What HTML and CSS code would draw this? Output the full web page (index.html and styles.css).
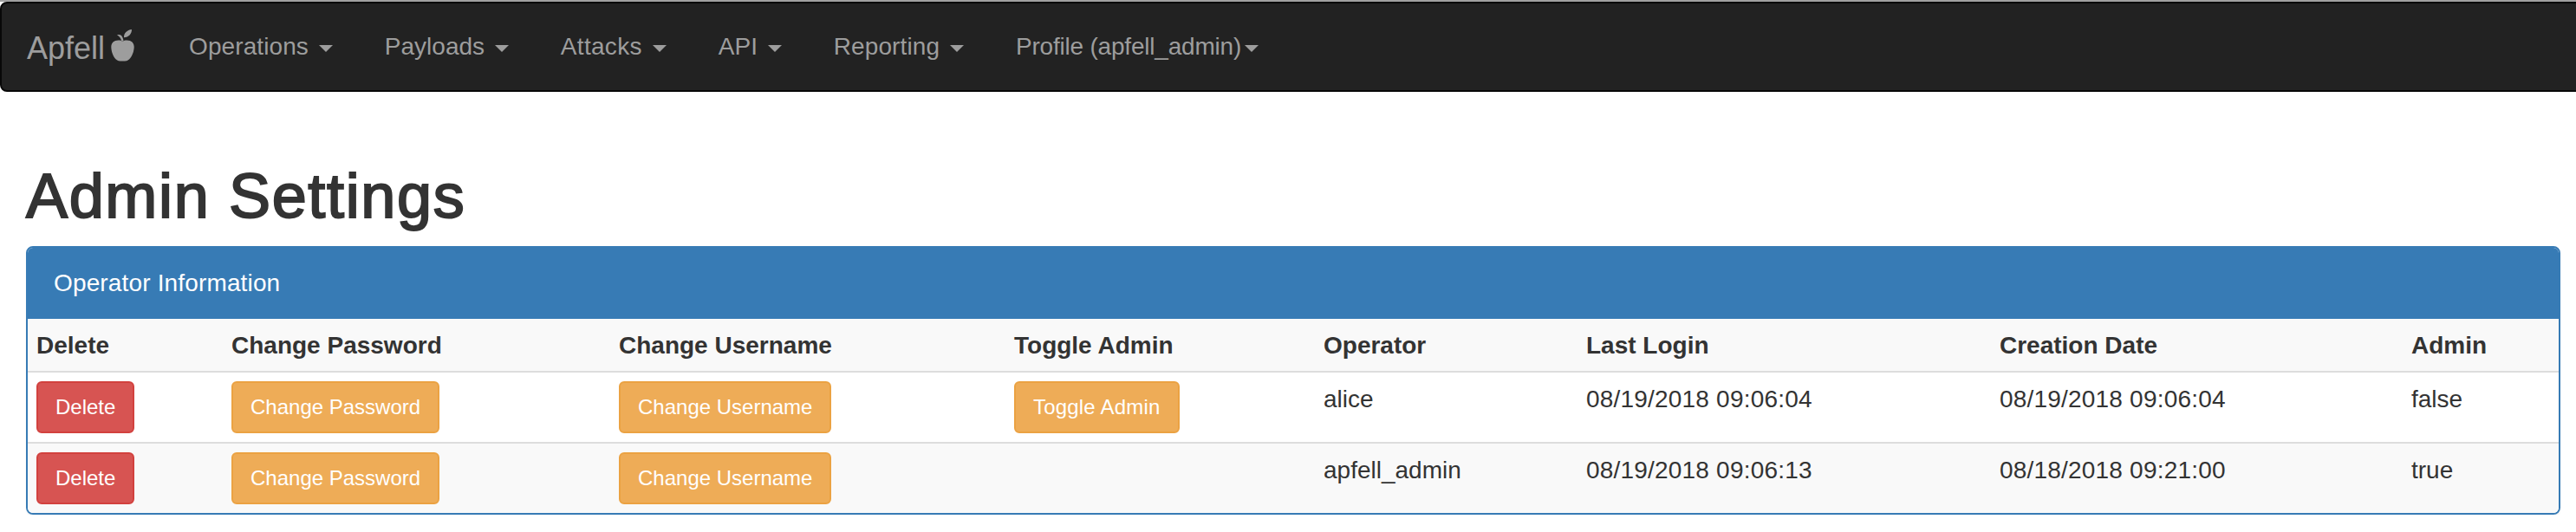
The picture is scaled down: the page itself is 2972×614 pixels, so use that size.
FILE: index.html
```html
<!DOCTYPE html>
<html lang="en">
<head>
<meta charset="utf-8">
<title>Admin Settings</title>
<link rel="stylesheet" href="styles.css">
</head>
<body>
<div class="page">
  <nav class="navbar">
    <a class="brand">Apfell<svg class="apple" viewBox="0 0 27 37" width="27" height="37"><path d="M13.5 13.7C12.3 13.1 10.8 12.5 8.5 12.5C3.5 12.5 .3 15.5 .3 20C.3 25.3 2.6 31.5 5.8 34.6C7.6 36.3 9.4 36.6 13.4 36.6C17.4 36.6 19.2 36.3 21 34.6C24.3 31.5 26.7 25.3 26.7 20C26.7 15.5 23.5 12.5 18.5 12.5C16.2 12.5 14.7 13.1 13.5 13.7ZM7 6.2C9.3 5.8 11 6 12 7C13.3 8.5 14.2 10.5 14.6 13.5L13.3 14L12.2 13.5C11.8 10.5 10 8 7 6.2ZM15 9.2C14.8 4.5 18.5 .5 24 0C24.1 5 20.5 9 15 9.2Z"/></svg></a>
    <ul class="nav">
      <li class="loose">Operations <b class="caret"></b></li>
      <li>Payloads <b class="caret"></b></li>
      <li class="looser">Attacks <b class="caret"></b></li>
      <li>API <b class="caret"></b></li>
      <li class="loose">Reporting <b class="caret"></b></li>
      <li class="tight">Profile (apfell_admin)<b class="caret"></b></li>
    </ul>
  </nav>
  <main class="content">
    <h1 class="title">Admin Settings</h1>
    <section class="panel">
      <div class="panel-heading">Operator Information</div>
      <table class="table">
        <colgroup><col class="c-delete"><col class="c-password"><col class="c-username"><col class="c-toggle"><col class="c-operator"><col class="c-login"><col class="c-created"><col></colgroup>
        <thead>
          <tr><th>Delete</th><th>Change Password</th><th>Change Username</th><th>Toggle Admin</th><th>Operator</th><th>Last Login</th><th>Creation Date</th><th>Admin</th></tr>
        </thead>
        <tbody>
          <tr>
            <td><button class="btn danger">Delete</button></td>
            <td><button class="btn warning">Change Password</button></td>
            <td><button class="btn warning">Change Username</button></td>
            <td><button class="btn warning toggle">Toggle Admin</button></td>
            <td class="text">alice</td><td class="text date">08/19/2018 09:06:04</td><td class="text date">08/19/2018 09:06:04</td><td class="text">false</td>
          </tr>
          <tr class="striped">
            <td><button class="btn danger">Delete</button></td>
            <td><button class="btn warning">Change Password</button></td>
            <td><button class="btn warning">Change Username</button></td>
            <td></td>
            <td class="text">apfell_admin</td><td class="text date">08/19/2018 09:06:13</td><td class="text date">08/18/2018 09:21:00</td><td class="text">true</td>
          </tr>
        </tbody>
      </table>
    </section>
  </main>
</div>
</body>
</html>
```
FILE: styles.css
```css
* { box-sizing: border-box; }
html { overflow: hidden; }
body {
  margin: 0;
  overflow: hidden;
  background: #fff;
  color: #333;
  font: 28px/40px "Liberation Sans", Arial, sans-serif;
}
.page { width: 2984px; border-top: 2px solid #a0a0a0; }
.navbar {
  display: flex;
  height: 104px;
  padding: 0 28px;
  background: #222;
  border: 2px solid #080808;
  border-radius: 8px;
  color: #9d9d9d;
}
.brand {
  display: flex;
  width: 158px;
  padding: 32px 0 0 1px;
  font-size: 36px;
}
.apple { margin: -2px 0 0 7px; fill: #9d9d9d; }
.nav { display: flex; margin: 0; padding: 0; list-style: none; }
.nav li { padding: 30px; white-space: nowrap; }
.nav .loose { letter-spacing: .1px; }
.nav .looser { letter-spacing: .3px; }
.nav .tight { letter-spacing: -.2px; }
.caret {
  display: inline-block;
  margin-left: 4px;
  vertical-align: middle;
  border: 8px solid transparent;
  border-top-color: #9d9d9d;
  border-bottom: 0;
}
.content { width: 2954px; padding: 81px 0 0 30px; }
.title {
  margin: 0 0 18px;
  font-size: 72px;
  font-weight: 400;
  line-height: 79px;
  letter-spacing: 1.65px;
  -webkit-text-stroke: 2px #333;
}
.panel {
  overflow: hidden;
  border: 2px solid #377bb5;
  border-radius: 8px;
  box-shadow: 0 2px 2px rgba(0, 0, 0, .05);
}
.panel-heading {
  height: 82px;
  padding: 21px 30px 19px;
  background: #377bb5;
  color: #fff;
  letter-spacing: .15px;
}
.table { width: 100%; table-layout: fixed; border-collapse: separate; border-spacing: 0; }
.c-delete { width: 225px; }
.c-password { width: 447px; }
.c-username { width: 456px; }
.c-toggle { width: 357px; }
.c-operator { width: 303px; }
.c-login { width: 477px; }
.c-created { width: 475px; }
th, td { padding: 10px; text-align: left; vertical-align: top; }
th { padding: 11px 10px 9px; background: #f9f9f9; font-weight: 700; }
td { height: 82px; border-top: 2px solid #ddd; }
.text { padding-top: 11px; padding-bottom: 9px; }
.date { letter-spacing: .2px; }
.striped td { background: #f9f9f9; }
.btn {
  display: block;
  height: 60px;
  padding: 10px 20px;
  border: 2px solid;
  border-radius: 6px;
  color: #fff;
  font: 24px/36px "Liberation Sans", Arial, sans-serif;
  white-space: nowrap;
}
.danger { background: #d75452; border-color: #d2413e; }
.warning { background: #eeac57; border-color: #eba242; }
.toggle { letter-spacing: .2px; }
```
